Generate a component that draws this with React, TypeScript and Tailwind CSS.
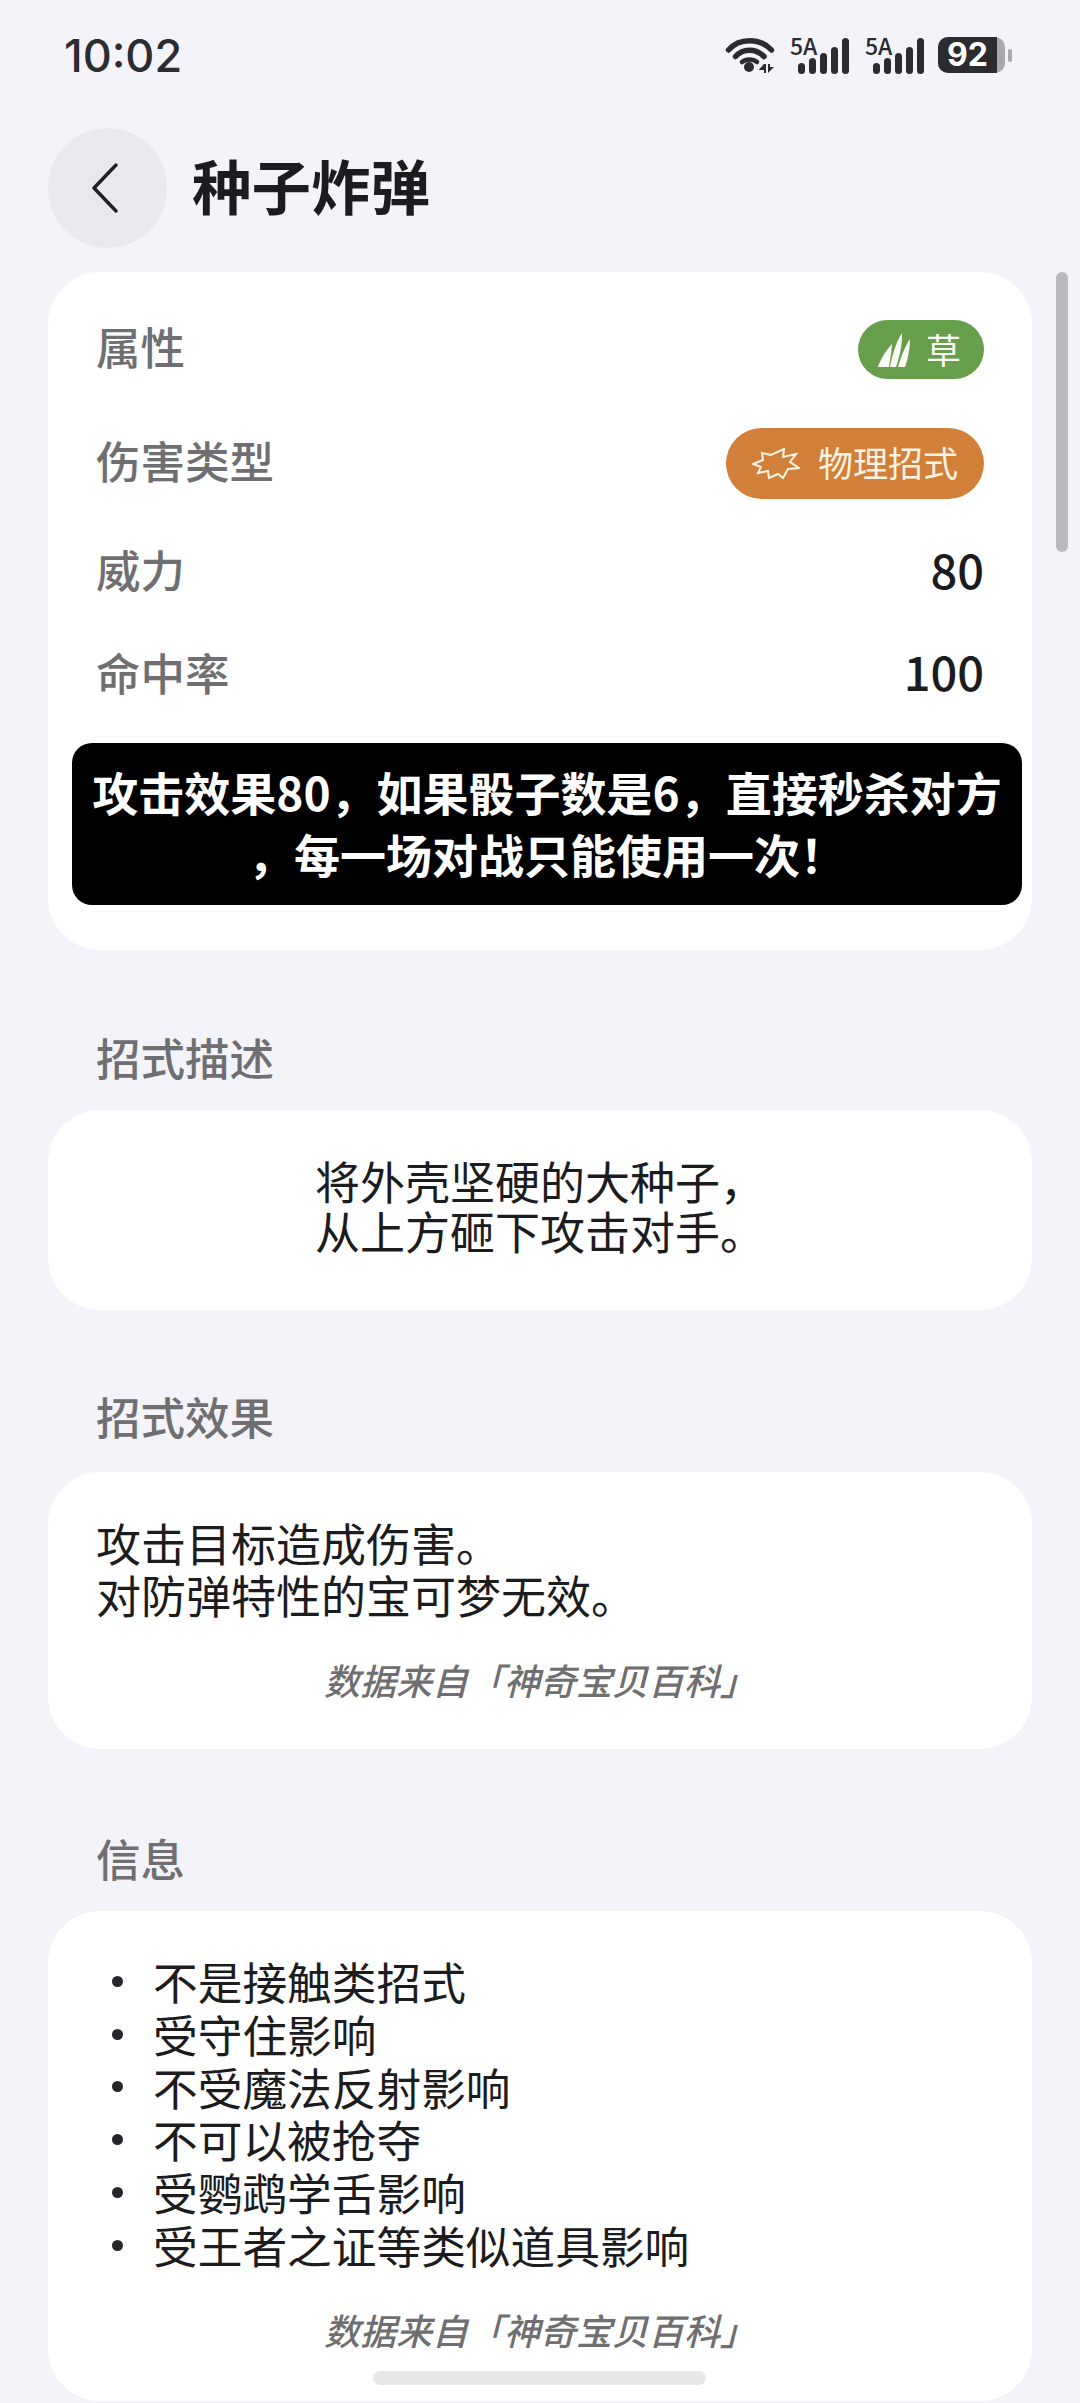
import React from 'react';

const CJK = { fontFamily: '"Noto Sans CJK SC", "Noto Sans", sans-serif' };

function Wifi() {
  return (
    <svg width="50" height="38" viewBox="0 0 50 38" fill="none" stroke="#2b2b30" strokeLinecap="round">
      <path d="M3.5 14 C14 1.5 35 1.5 46.5 14" strokeWidth="5.5" />
      <path d="M10.5 20.5 C18 12 31 12 39 20.5" strokeWidth="5.5" />
      <path d="M17 26 C21 22.5 28 22.5 32 26" strokeWidth="4.5" />
      <circle cx="24" cy="31" r="5" fill="#2b2b30" stroke="none" />
      <path d="M39 28 L33.5 34 H39 V37 H41 V28 Z M43 28 H45 V31 H49 L43 37 Z" fill="#2b2b30" stroke="none" />
    </svg>
  );
}

function Signal() {
  return (
    <div className="relative w-[62px] h-[37px]">
      <span className="absolute left-[2px] top-[-3px] text-[23px] leading-[23px] font-medium text-[#2b2b30]" style={CJK}>5A</span>
      <svg className="absolute left-0 top-0" width="62" height="37" viewBox="0 0 62 37" fill="#2b2b30">
        <rect x="10" y="26" width="7" height="11" rx="3.5" />
        <rect x="21" y="21" width="7" height="16" rx="3.5" />
        <rect x="32" y="16" width="7" height="21" rx="3.5" />
        <rect x="43" y="10" width="7" height="27" rx="3.5" />
        <rect x="54" y="1" width="7" height="36" rx="3.5" />
      </svg>
    </div>
  );
}

function Battery() {
  return (
    <div className="flex items-center gap-[3px]">
      <div className="w-[67px] h-[36px] rounded-[10px] flex bg-[#a9a9ad]">
        <div className="w-[59px] rounded-l-[10px] bg-[#2b2b30] flex items-center justify-center text-white text-[32px] font-bold leading-none" style={{ fontFamily: 'Inter, sans-serif' }}>92</div>
      </div>
      <div className="w-[4px] h-[13px] rounded-full bg-[#a9a9ad]" />
    </div>
  );
}

function GrassIcon() {
  return (
    <svg width="34" height="36" viewBox="0 0 34 36" fill="#fbfbf6">
      <path d="M0.7 35 C4 27 9 18 15 12 C14.5 20 13 28 12 35 Z" />
      <path d="M13 35 C15 24 19 10 25 1 C25.5 12 22.5 25 19 35 Z" />
      <path d="M21 35 C24 25 28 14 33 7 C33 16 31 27 28 35 Z" />
    </svg>
  );
}

function BurstIcon() {
  return (
    <svg width="48" height="32" viewBox="-1 -1 48 32" fill="none" stroke="#fdf3e2" strokeWidth="2">
      <path d="M0 15 L10 11 L9 4 L18 6 L31 0 L30 8 L43 5 L37 13 L46 19 L35 20 L30 29 L25 25 L16 29 L15 22 L5 24 L8 18 Z" />
    </svg>
  );
}

function Row({ label, children, className }: { label: string; children: React.ReactNode; className: string }) {
  return (
    <div className={`flex items-center justify-between ${className}`}>
      <span className="text-[44.5px] font-medium text-[#6f6f72] leading-none pb-[6px]">{label}</span>
      {children}
    </div>
  );
}

function Section({ label, gapClass }: { label: string; gapClass: string }) {
  return (
    <div className={`h-[60px] px-[96px] flex items-center text-[44.5px] font-medium text-[#6f6f72] ${gapClass}`}>{label}</div>
  );
}

function Source() {
  return <p className="text-center italic font-medium text-[36px] leading-[50px] text-[#6f6f72]">数据来自「神奇宝贝百科」</p>;
}

const infoItems = ['不是接触类招式', '受守住影响', '不受魔法反射影响', '不可以被抢夺', '受鹦鹉学舌影响', '受王者之证等类似道具影响'];

export default function App() {
  return (
    <div className="relative w-[1080px] h-[2403px] overflow-hidden bg-[#f3f3f9] text-[#1c1c1e]" style={CJK}>
      {/* Status bar */}
      <div className="h-[110px] pl-[64px] pr-[68px] flex items-center justify-between">
        <span className="text-[45px] font-medium text-[#2b2b30] leading-none" style={{ fontFamily: 'Inter, sans-serif' }}>10:02</span>
        <div className="flex items-center gap-[13px]">
          <Wifi />
          <Signal />
          <Signal />
          <Battery />
        </div>
      </div>

      {/* Header */}
      <div className="mt-[18px] px-[48px] flex items-center gap-[25px]">
        <div className="w-[119px] h-[120px] rounded-full bg-[#e9e9ed] flex items-center justify-center pr-[6px]">
          <svg width="30" height="52" viewBox="0 0 30 52" fill="none" stroke="#222" strokeWidth="3.5" strokeLinecap="round" strokeLinejoin="round">
            <path d="M26 3 L4 26 L26 49" />
          </svg>
        </div>
        <h1 className="text-[59.5px] font-bold text-[#1c1c1e] leading-none pb-[6px]">种子炸弹</h1>
      </div>

      {/* Stats card */}
      <div className="mt-[24px] mx-[48px] h-[678px] rounded-[52px] bg-white px-[48px] pt-[48px]">
        <Row label="属性" className="h-[59px]">
          <div className="w-[126px] h-[59px] rounded-full bg-[#689f4c] flex items-center justify-center gap-[15px] pr-[4px] text-[35px] text-[#fbfbf6]">
            <GrassIcon />
            <span className="leading-none pb-[3px]">草</span>
          </div>
        </Row>
        <Row label="伤害类型" className="h-[71px] mt-[49px]">
          <div className="w-[258px] h-[71px] rounded-full bg-[#d27f3a] flex items-center justify-center gap-[18px] text-[35px] text-[#fdf3e2]">
            <BurstIcon />
            <span className="leading-none pb-[4px]">物理招式</span>
          </div>
        </Row>
        <Row label="威力" className="h-[64px] mt-[41px]">
          <span className="text-[47px] font-medium leading-none pb-[8px]">80</span>
        </Row>
        <Row label="命中率" className="h-[64px] mt-[39px]">
          <span className="text-[47px] font-medium leading-none pb-[10px]">100</span>
        </Row>
        <div className="mt-[36px] -ml-[24px] -mr-[38px] h-[162px] pb-[4px] rounded-[20px] bg-black flex items-center justify-center text-center text-white font-bold text-[46px] leading-[62px] whitespace-nowrap">
          <p>攻击效果80，如果骰子数是6，直接秒杀对方<br />，每一场对战只能使用一次！</p>
        </div>
      </div>

      {/* Description */}
      <Section label="招式描述" gapClass="mt-[77px]" />
      <div className="mt-[23px] mx-[48px] h-[200px] rounded-[52px] bg-white pt-[46px] text-center text-[45px] leading-[50px]">
        将外壳坚硬的大种子，<br />从上方砸下攻击对手。
      </div>

      {/* Effect */}
      <Section label="招式效果" gapClass="mt-[76px]" />
      <div className="mt-[26px] mx-[48px] h-[277px] rounded-[52px] bg-white px-[48px] pt-[45px]">
        <p className="text-[45px] leading-[52px]">攻击目标造成伤害。<br />对防弹特性的宝可梦无效。</p>
        <div className="mt-[33px]">
          <Source />
        </div>
      </div>

      {/* Info */}
      <Section label="信息" gapClass="mt-[79px]" />
      <div className="mt-[23px] mx-[48px] h-[490px] rounded-[52px] bg-white px-[48px] pt-[44px]">
        <ul className="flex flex-col">
          {infoItems.map((item) => (
            <li key={item} className="flex items-center h-[52.8px] text-[44.7px] leading-none">
              <span className="w-[11px] h-[11px] rounded-full bg-[#26262a] ml-[16px] mr-[30px]" />
              {item}
            </li>
          ))}
        </ul>
        <div className="mt-[32px]">
          <Source />
        </div>
      </div>

      {/* Scrollbar + gesture bar overlays */}
      <div className="absolute left-[1056px] top-[272px] w-[12px] h-[280px] rounded-full bg-[#b9b9be]" />
      <div className="absolute left-[373px] top-[2371px] w-[333px] h-[14px] rounded-full bg-[#e8e8ea]" />
    </div>
  );
}
